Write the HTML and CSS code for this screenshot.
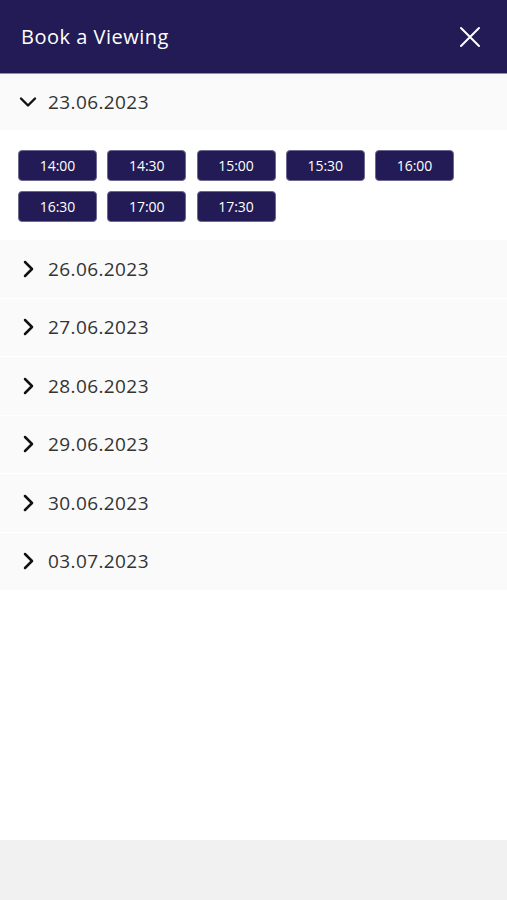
FILE: index.html
```html
<!DOCTYPE html>
<html lang="en">
<head>
<meta charset="utf-8">
<title>Book a Viewing</title>
<link rel="stylesheet" href="styles.css">
</head>
<body>
<div class="page">
  <header class="topbar">
    <h1 class="title">Book a Viewing</h1>
    <button class="close" aria-label="Close">
      <svg width="22" height="22" viewBox="0 0 22 22"><path d="M2 2L20 20M20 2L2 20" stroke="#fff" stroke-width="2" stroke-linecap="round" fill="none"/></svg>
    </button>
  </header>
  <main class="list">
    <div class="day open">
      <div class="day-head">
        <svg class="chev" width="18" height="18" viewBox="0 0 18 18"><path d="M2 5.5L9 12.5L16 5.5" stroke="#111" stroke-width="2.4" fill="none" stroke-linecap="round" stroke-linejoin="round"/></svg>
        <span class="date">23.06.2023</span>
      </div>
      <div class="slots">
        <button class="slot">14:00</button>
        <button class="slot">14:30</button>
        <button class="slot">15:00</button>
        <button class="slot">15:30</button>
        <button class="slot">16:00</button>
        <button class="slot">16:30</button>
        <button class="slot">17:00</button>
        <button class="slot">17:30</button>
      </div>
    </div>
    <div class="day"><div class="day-head"><svg class="chev" width="18" height="18" viewBox="0 0 18 18"><path d="M6 2L13 9L6 16" stroke="#111" stroke-width="2.5" fill="none" stroke-linecap="round" stroke-linejoin="round"/></svg><span class="date">26.06.2023</span></div></div>
    <div class="day"><div class="day-head"><svg class="chev" width="18" height="18" viewBox="0 0 18 18"><path d="M6 2L13 9L6 16" stroke="#111" stroke-width="2.5" fill="none" stroke-linecap="round" stroke-linejoin="round"/></svg><span class="date">27.06.2023</span></div></div>
    <div class="day"><div class="day-head"><svg class="chev" width="18" height="18" viewBox="0 0 18 18"><path d="M6 2L13 9L6 16" stroke="#111" stroke-width="2.5" fill="none" stroke-linecap="round" stroke-linejoin="round"/></svg><span class="date">28.06.2023</span></div></div>
    <div class="day"><div class="day-head"><svg class="chev" width="18" height="18" viewBox="0 0 18 18"><path d="M6 2L13 9L6 16" stroke="#111" stroke-width="2.5" fill="none" stroke-linecap="round" stroke-linejoin="round"/></svg><span class="date">29.06.2023</span></div></div>
    <div class="day"><div class="day-head"><svg class="chev" width="18" height="18" viewBox="0 0 18 18"><path d="M6 2L13 9L6 16" stroke="#111" stroke-width="2.5" fill="none" stroke-linecap="round" stroke-linejoin="round"/></svg><span class="date">30.06.2023</span></div></div>
    <div class="day"><div class="day-head"><svg class="chev" width="18" height="18" viewBox="0 0 18 18"><path d="M6 2L13 9L6 16" stroke="#111" stroke-width="2.5" fill="none" stroke-linecap="round" stroke-linejoin="round"/></svg><span class="date">03.07.2023</span></div></div>
  </main>
  <footer class="footer"></footer>
</div>
</body>
</html>
```
FILE: styles.css
```css
* { box-sizing: border-box; }
html, body { margin: 0; padding: 0; }
body {
  font-family: "Open Sans", "Noto Sans", sans-serif;
  background: #fff;
  color: #333;
}
.page {
  height: 900px;
  display: flex;
  flex-direction: column;
}
.topbar {
  height: 74px;
  flex: none;
  background: #221b55;
  display: flex;
  align-items: center;
  justify-content: space-between;
  padding: 0 26px 0 21px;
  border-bottom: 1px solid #8f8cae;
}
.title {
  margin: 0;
  color: #fff;
  font-size: 20px;
  font-weight: 400;
  letter-spacing: 0.5px;
}
.close {
  background: none;
  border: 0;
  padding: 0;
  width: 22px;
  height: 22px;
  display: flex;
}
.list {
  flex: 1;
}
.day-head {
  height: 58.5px;
  background: #fafafa;
  border-bottom: 1.5px solid #fff;
  display: flex;
  align-items: center;
  padding-left: 19px;
  gap: 11px;
}
.open .day-head { height: 56px; border-bottom: 0; }
.chev { flex: none; }
.date {
  font-size: 19px;
  color: #333;
  letter-spacing: 0.4px;
}
.slots {
  display: flex;
  flex-wrap: wrap;
  gap: 10px 10.25px;
  padding: 20px 18px 18px;
  background: #fff;
}
.slot {
  width: 79px;
  height: 31px;
  background: #221b55;
  color: #fff;
  border: 1px solid #6d6890;
  border-radius: 4px;
  font-family: "Open Sans", sans-serif;
  font-size: 14px;
  padding: 0;
}
.footer {
  height: 60px;
  flex: none;
  background: #f1f1f1;
}
```
